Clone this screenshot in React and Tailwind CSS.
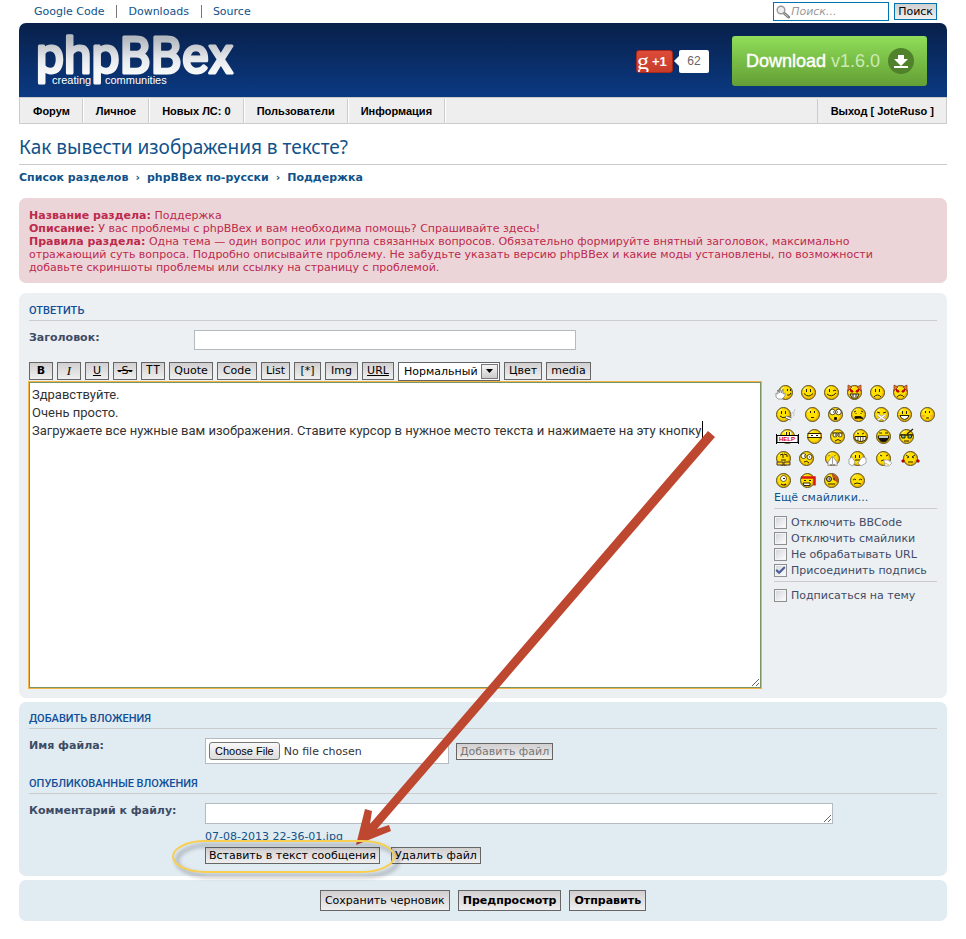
import React, { useState } from 'react';
import { Check } from 'lucide-react';
import { twMerge } from 'tailwind-merge';

const topLinks = ['Google Code', 'Downloads', 'Source'];
const navLinks = ['Форум', 'Личное', 'Новых ЛС: 0', 'Пользователи', 'Информация'];
const crumbs = ['Список разделов', 'phpBBex по-русски', 'Поддержка'];

const bbcodes = [
  { label: 'B', style: 'w-6 font-bold' },
  { label: 'I', style: "w-6 italic text-[13px] font-['Liberation_Serif',serif]" },
  { label: 'U', style: 'w-6 underline' },
  { label: '-S-', style: 'w-6 line-through' },
  { label: 'TT', style: "w-6 text-[12px] font-['Liberation_Mono',monospace]" },
  { label: 'Quote', style: 'w-11' },
  { label: 'Code', style: 'w-10' },
  { label: 'List', style: 'w-[29px]' },
  { label: '[*]', style: 'w-[27px]' },
  { label: 'Img', style: 'w-[33px]' },
  { label: 'URL', style: 'w-8 underline' },
];

// Each smiley: drawing width, offset of the face, and its features
const smileyRows = [
  [
    { name: 'hi', w: 17, x: 2 },
    { name: 'smile' },
    { name: 'wink' },
    { name: 'devil' },
    { name: 'sad' },
    { name: 'angrydevil' },
  ],
  [
    { name: 'smoke', w: 21 },
    { name: 'hmm' },
    { name: 'shock' },
    { name: 'scared' },
    { name: 'mute' },
    { name: 'grin' },
    { name: 'blush' },
  ],
  [
    { name: 'help', w: 23, x: 4 },
    { name: 'ninja' },
    { name: 'mad' },
    { name: 'teeth' },
    { name: 'laugh' },
    { name: 'pirate' },
  ],
  [
    { name: 'sorry' },
    { name: 'crazy' },
    { name: 'pray', w: 19, x: 3 },
    { name: 'clap', w: 18, x: 1 },
    { name: 'sick', w: 18, x: 1 },
    { name: 'boxer', w: 18, x: 2 },
  ],
  [
    { name: 'cyclop' },
    { name: 'rambo', w: 17, x: 1 },
    { name: 'terminator' },
    { name: 'sleepy', w: 18, x: 3 },
  ],
];

const dots = <path d="M5.500 4v3M9.500 4v3" />;

const horns = <path d="M1 6V0l4 2zM14 6V0l-4 2z" fill="#e8781c" stroke="#733" strokeWidth=".7" />;

const features = {
  hi: (
    <>
      <path d="M9.500 4v2M12.500 4v2M9 10q3 1 4-2" />
      <path d="M-2 8v4l2 2h4l3-3V8L5 9V4L3.500 8 2 3.500 1.500 8-.500 5 0 9z" fill="#fff" stroke="#777" strokeWidth=".7" />
    </>
  ),
  smile: <>{dots}<path d="M3 8.500q4.500 5 9 0" /></>,
  wink: <><path d="M5.500 4v3M9 6l2-1 1 1M3 9q4.500 4 9-1" /></>,
  devil: (
    <>
      <path d="M3 4l3 2v1H4zM12 4L9 6v1h2z" fill="#e00000" stroke="#b00" />
      <path d="M3 9h9l-2 4H5z" fill="#fff" />
      <path d="M6 9v3M9 9v3" />
    </>
  ),
  sad: <>{dots}<path d="M4 12q3.500-4 7 0" /></>,
  angrydevil: (
    <>
      <path d="M3 4l3 2v1H4zM12 4L9 6v1h2z" fill="#e00000" stroke="#b00" />
      <path d="M4 12q3.500-4 7 0" />
    </>
  ),
  smoke: (
    <>
      {dots}
      <path d="M4 9q3 3 6 1" />
      <path d="M10 10l5 2" stroke="#555" strokeWidth="3" />
      <path d="M10 10l5 2" stroke="#fff" strokeWidth="1.500" />
      <path d="M16 10q-2-3 1-5M18 9q-1-3 1-7" stroke="#bbb" strokeWidth=".8" />
    </>
  ),
  hmm: <><path d="M5.500 4v2M9.500 4v2M6 10.500h3" /></>,
  shock: (
    <>
      <circle cx="4.500" cy="5" r="2.800" fill="#fff" strokeWidth=".8" />
      <circle cx="10.500" cy="5" r="2.800" fill="#fff" strokeWidth=".8" />
      <path d="M5 5h1M9 5h1M6.500 10.500h2v2h-2z" fill="#000" />
    </>
  ),
  scared: <><path d="M3 5l2-1M5 6v1M10 4l2 1M10 6v1M4 9.500h6l2 2-4-.500-4 .500z" fill="#000" /></>,
  mute: (
    <>
      <path d="M3 5l3 1M12 5L9 6" />
      <path d="M4 8l7 5M11 8l-7 5" stroke="#999" strokeWidth="2.500" />
      <path d="M4 8l7 5M11 8l-7 5" stroke="#fff" strokeWidth="1.500" />
    </>
  ),
  grin: <>{dots}<path d="M3 8.500h9q-1 4-4.500 4T3 8.500z" fill="#fff" /></>,
  blush: (
    <>
      <path d="M5.500 4v2M9.500 4v2M6 11h3" />
      <path d="M2 9h3M10 9h3" stroke="#f5a32e" strokeWidth="1.500" />
    </>
  ),
  help: (
    <>
      <path d="M5 4h2M9 4h2" stroke="#fff" strokeWidth="3" />
      <path d="M6.500 3v3M9.500 3v3" />
    </>
  ),
  ninja: (
    <>
      <path d="M.500 4.500h14M.500 8.500h14" />
      <path d="M2 6.500h11" stroke="#fff" strokeWidth="3" />
      <path d="M4 6.500h2M9 6.500h2" />
    </>
  ),
  mad: (
    <>
      <path d="M2 4h11" />
      <circle cx="5" cy="6" r="2" fill="#fff" strokeWidth=".8" />
      <circle cx="10" cy="6" r="2" fill="#fff" strokeWidth=".8" />
      <path d="M5 6h1M9 6h1M5 12q3-3 6 0" />
    </>
  ),
  teeth: (
    <>
      <path d="M4 4l2 1M11 4L9 5" />
      <path d="M2 7.500h11v3q-5 4-11 0z" fill="#fff" />
      <path d="M5 7v5M7.500 7v5M10 7v5" strokeWidth=".7" />
    </>
  ),
  laugh: (
    <>
      <path d="M3 4h3M9 4h3" />
      <path d="M2 7h11q-1 6-5.500 6T2 7z" fill="#111" />
      <path d="M3 8h9" stroke="#fff" strokeWidth="1.500" />
    </>
  ),
  pirate: (
    <>
      <path d="M1 6h13M8 5l6-5" strokeWidth="1.300" />
      <path d="M2 6h4v3H3zM9 6h4l-1 3H9z" fill="#7db89a" />
      <path d="M5 12h5" />
    </>
  ),
  sorry: (
    <>
      <path d="M4 4l3-1v4M8 3l3 1v2M5 9h5" />
      <path d="M1 11h6v3H1zM8 11h6v3H8z" fill="#ffd800" stroke="#433" />
    </>
  ),
  crazy: (
    <>
      <circle cx="4.500" cy="5" r="2.500" fill="#fff" strokeWidth=".8" />
      <circle cx="10.500" cy="6" r="2.500" fill="#fff" strokeWidth=".8" />
      <path d="M5 5h1M10 6h1M5 11q3-2 5 1" />
    </>
  ),
  pray: (
    <>
      <path d="M3 5l2-1M9 5l2-1" stroke="#a80" />
      <path d="M7.500 5L3 11v4l3-2 1.500 2L9 13l3 2v-4z" fill="#fff" stroke="#888" strokeWidth=".8" />
      <path d="M7.500 6v8" stroke="#888" strokeWidth=".8" />
    </>
  ),
  clap: (
    <>
      {dots}
      <path d="M5 9h6" />
      <path d="M-1 8l3-2 3 5-2 4-4-2zM16 7l-4-1-4 6 3 3 5-3z" fill="#fff" stroke="#888" strokeWidth=".7" />
    </>
  ),
  sick: (
    <>
      <path d="M4 4l2 1M10 5l2-1M5 10q3-2 4 0" />
      <path d="M8 9h4l4 3-3 3H9z" fill="#fff" stroke="#999" strokeWidth=".7" />
      <path d="M9 12l4 2" stroke="#d8c030" />
    </>
  ),
  boxer: (
    <>
      <path d="M3 4l3 2-2 1M12 4L9 6l2 1M5 11h5" />
      <path d="M-1 9h2v2h-2zM14 9h2v2h-2z" fill="#d00" stroke="#a00" />
    </>
  ),
  cyclop: (
    <>
      <circle cx="7.500" cy="5.500" r="3" fill="#fff" strokeWidth=".7" />
      <path d="M7 5.500h2M5 11q3 2 5 0" strokeWidth="1.200" />
    </>
  ),
  rambo: (
    <>
      <path d="M1 4.500h13.500v8" stroke="#d81818" strokeWidth="2.500" />
      <path d="M4 7.500h2M9 7.500h2" />
      <path d="M3 10h7v2.500H4z" fill="#fff" />
    </>
  ),
  terminator: (
    <>
      <path d="M8 1l5 3 1 5-4-2z" fill="#c85a18" stroke="#a33" strokeWidth=".6" />
      <circle cx="5" cy="6" r="2.500" fill="#bbb" />
      <path d="M5 6h1" stroke="#d00" strokeWidth="1.500" />
      <path d="M9 6h2M4 11h7" />
    </>
  ),
  sleepy: <><path d="M3 7q2-2 3 0M9 7q2-2 3 0M4 11l3-1 4 1" /></>,
};

function Smiley({ name, w = 15, x = 0 }) {
  return (
    <svg width={w} height="16" viewBox={`0 0 ${w} 16`} role="img" aria-label={name} className="overflow-visible">
      <g transform={`translate(${x} 0)`} fill="none" stroke="#2a2000" strokeWidth="1">
        <circle cx="7.500" cy="7.500" r="7" fill="#f0b800" stroke="#57501f" />
        <circle cx="7" cy="7" r="5.500" fill="#ffe100" stroke="none" />
        <path d="M3 5q1-2 3-3" stroke="#fffbb0" />
        {(name === 'devil' || name === 'angrydevil') && horns}
        {features[name]}
      </g>
      {name === 'help' && (
        <g>
          <rect x="1" y="6.500" width="21" height="7" fill="#fff" stroke="#000" />
          <path d="M.5 5v10M22.500 5v10" stroke="#000" />
          <text x="3" y="12" fontSize="6" fontWeight="bold" fill="#e00000" fontFamily="Liberation Sans, sans-serif">
            HELP
          </text>
        </g>
      )}
    </svg>
  );
}

function PushButton({ className = '', children, ...props }) {
  return (
    <button
      type="button"
      className={twMerge(
        'border border-[#666] bg-linear-to-b from-[#d2cfd0] to-[#efefef] text-center text-black whitespace-nowrap',
        className
      )}
      {...props}
    >
      {children}
    </button>
  );
}

function Option({ label, checked = false }) {
  const [on, setOn] = useState(checked);
  return (
    <label className="flex h-4 items-center gap-1">
      <span className="relative flex">
        <input
          type="checkbox"
          checked={on}
          onChange={() => setOn(!on)}
          className="size-[13px] appearance-none border border-[#8e8f8f] bg-linear-to-br from-[#d0d3d8] to-white outline-1 -outline-offset-2 outline-[#f4f4f4]"
        />
        {on && <Check size={11} strokeWidth={5} className="pointer-events-none absolute top-px left-px text-[#4a5f97]" />}
      </span>
      {label}
    </label>
  );
}

function SectionTitle({ children }) {
  return (
    <h3 className="border-b border-[#ccc] pb-[2px] font-[Roboto,sans-serif] text-[11px] leading-[14px] font-medium text-[#115098] uppercase">
      {children}
    </h3>
  );
}

function Header() {
  return (
    <header>
      <div className="flex h-[23px] items-center justify-between pr-[10px] pl-[15px]">
        <ul className="flex text-[#105289]">
          {topLinks.map((link, i) => (
            <li key={link} className={i ? 'ml-3 border-l border-[#777] pl-[11px]' : ''}>
              <a href="#" className="hover:underline">{link}</a>
            </li>
          ))}
        </ul>
        <form className="flex items-center gap-[5px]" onSubmit={(e) => e.preventDefault()}>
          <label className="flex h-[19px] w-[116px] items-center border border-[#0075b0] bg-white pl-[2px]">
            <svg width="14" height="14" viewBox="0 0 14 14" className="shrink-0">
              <path d="M8 8l4.500 4" stroke="#777" strokeWidth="3" strokeLinecap="round" />
              <path d="M8.500 8.500l4 3.500" stroke="#ccc" strokeWidth="1" />
              <circle cx="5" cy="5" r="3.800" fill="#eee" stroke="#999" strokeWidth="1.400" />
            </svg>
            <input
              type="search"
              aria-label="Поиск"
              placeholder="Поиск..."
              className="w-full min-w-0 pl-px outline-none placeholder:text-[#999] placeholder:italic"
            />
          </label>
          <PushButton className="h-[17px] border-[#0075b0] px-[3px] leading-[14px]">Поиск</PushButton>
        </form>
      </div>

      <div className="flex h-[74px] items-center rounded-t-[7px] bg-linear-to-b from-[#08204a] to-[#0a3a83] pt-[2px] pr-5 pl-[18px]">
        <a href="#">
          <svg width="204" height="72" viewBox="0 0 204 72" role="img" aria-label="phpBBex creating communities">
            <defs>
              <linearGradient id="silver" x1="0" y1="0" x2="0" y2="1">
                <stop offset="0.200" stopColor="#b4b9c0" />
                <stop offset="0.550" stopColor="#e6e9ec" />
                <stop offset="0.800" stopColor="#f8f9fa" />
              </linearGradient>
            </defs>
            <text
              x="-1"
              y="48"
              fontSize="50"
              fontWeight="400"
              fontFamily="Roboto, sans-serif"
              fill="url(#silver)"
              stroke="url(#silver)"
              strokeWidth="3"
              strokeLinejoin="round"
            >
              phpBBex
            </text>
            <text x="15" y="59" fontSize="11" fontFamily="Liberation Sans, sans-serif" fill="#fff">creating</text>
            <text x="68" y="59" fontSize="11" fontFamily="Liberation Sans, sans-serif" fill="#fff">communities</text>
          </svg>
        </a>
        <div className="ml-auto flex items-center font-['Liberation_Sans',sans-serif]">
          <button
            type="button"
            className="flex h-[23px] w-[37px] items-center gap-[3px] overflow-hidden rounded-[3px] border border-[#a9281b] bg-linear-to-b from-[#dd4b39] to-[#c93c2a] font-bold text-white"
          >
            <span className="font-['Liberation_Serif',serif] text-[24px] leading-[14px] font-normal">g</span>
            <span className="text-[13px]">+1</span>
          </button>
          <svg width="5" height="10" viewBox="0 0 5 10" className="ml-px">
            <path d="M5 0v10L0 5z" fill="#fff" />
          </svg>
          <span className="flex h-[23px] w-[30px] items-center justify-center rounded-[2px] bg-white text-[12px] text-[#666]">62</span>
        </div>
        <a
          href="#"
          className="ml-[23px] flex h-[50px] w-[195px] items-center rounded-[3px] bg-linear-to-b from-[#90de5a] via-[#78bd45] to-[#649f36] pl-[14px] font-['Liberation_Sans',sans-serif] text-[18px] text-white"
        >
          <span className="[-webkit-text-stroke:0.4px_white]">Download</span>
          <span className="ml-[5px] text-[#cdeab5]">v1.6.0</span>
          <svg width="26" height="26" viewBox="0 0 26 26" className="ml-2">
            <circle cx="13" cy="13" r="13" fill="#4f822b" />
            <path d="M10 7h6v4h4l-7 7-7-7h4z" fill="#fff" />
            <path d="M6 19h14" stroke="#fff" strokeWidth="2" />
          </svg>
        </a>
      </div>

      <nav className="flex h-[27px] border border-[#ccc] bg-[#eee] pt-px font-['Liberation_Sans',sans-serif] font-bold text-black">
        {navLinks.map((link) => (
          <a key={link} href="#" className="flex items-center border-r border-[#ccc] pr-3 pl-[13px] shadow-[1px_0_0_#fff]">
            {link}
          </a>
        ))}
        <a href="#" className="ml-auto flex items-center border-l border-[#ccc] pr-3 pl-[13px]">Выход [ JoteRuso ]</a>
      </nav>
    </header>
  );
}

function Annotation() {
  return (
    <svg width="966" height="939" viewBox="0 0 966 939" className="pointer-events-none absolute top-0 left-0" aria-hidden="true">
      <defs>
        <filter id="soft" x="-10%" y="-30%" width="120%" height="180%">
          <feGaussianBlur stdDeviation="2" />
        </filter>
      </defs>
      <path d="M702.500 421v18" stroke="#000" />
      <path
        d="M708 431L715 437L377 829L389 825L391 831L356 845L365 809L372 811L370 824z"
        fill="#be4730"
      />
      <rect x="177" y="845" width="221" height="31" rx="32" ry="15.500" fill="none" stroke="#000" strokeOpacity=".3" strokeWidth="3" filter="url(#soft)" />
      <rect x="173" y="841" width="221" height="31" rx="32" ry="15.500" fill="none" stroke="#f8cf50" strokeWidth="2" />
    </svg>
  );
}

export default function App() {
  const [message, setMessage] = useState(
    'Здравствуйте.\nОчень просто.\nЗагружаете все нужные вам изображения. Ставите курсор в нужное место текста и нажимаете на эту кнопку'
  );

  return (
    <div className="relative min-h-screen bg-white px-[19px] pb-[18px] font-['DejaVu_Sans',sans-serif] text-[11px] leading-[13px] text-[#3e4b65]">
      <Header />

      <h1 className="mt-[9px] border-b border-[#ccc] pb-[3px] font-['Noto_Sans',sans-serif] text-[19px] leading-7 text-[#105289]">
        Как вывести изображения в тексте?
      </h1>
      <div className="mt-[6px] flex gap-[7px] font-bold text-[#105289]">
        {crumbs.map((crumb, i) => (
          <React.Fragment key={crumb}>
            {i > 0 && <span>›</span>}
            <a href="#" className="hover:underline">{crumb}</a>
          </React.Fragment>
        ))}
      </div>

      <div className="mt-[14px] rounded-[7px] bg-[#ecd5d8] pt-[11px] pr-[26px] pb-[9px] pl-[10px] text-[#bc2a4d]">
        <p><strong>Название раздела:</strong> Поддержка</p>
        <p><strong>Описание:</strong> У вас проблемы с phpBBex и вам необходима помощь? Спрашивайте здесь!</p>
        <p>
          <strong>Правила раздела:</strong> Одна тема — один вопрос или группа связанных вопросов. Обязательно
          формируйте внятный заголовок, максимально отражающий суть вопроса. Подробно описывайте проблему. Не
          забудьте указать версию phpBBex и какие моды установлены, по возможности добавьте скриншоты проблемы или
          ссылку на страницу с проблемой.
        </p>
      </div>

      <section className="mt-[10px] rounded-[7px] bg-[#ecf0f3] px-[10px] pt-[11px] pb-[10px]">
        <SectionTitle>Ответить</SectionTitle>
        <div className="mt-[9px] flex">
          <label htmlFor="subject" className="w-[165px] pt-px font-bold">Заголовок:</label>
          <input id="subject" type="text" className="h-5 w-[382px] border border-[#b4bac0] bg-white px-1" />
        </div>

        <div className="mt-[11px] flex h-5 items-center gap-1">
          {bbcodes.map(({ label, style }) => (
            <PushButton key={label} className={`h-[18px] ${style} leading-4`}>{label}</PushButton>
          ))}
          <div className="relative flex">
            <select
              aria-label="Размер"
              className="h-[19px] w-[102px] appearance-none border border-[#666] bg-white pl-[5px] text-black"
            >
              <option>Нормальный</option>
              <option>Маленький</option>
              <option>Большой</option>
            </select>
            <span className="pointer-events-none absolute top-[2px] right-[2px] flex h-[15px] w-[17px] items-center justify-center border border-[#777] bg-linear-to-b from-[#f5f5f5] to-[#ccc]">
              <svg width="7" height="4" viewBox="0 0 7 4"><path d="M0 0h7L3.500 4z" fill="#000" /></svg>
            </span>
          </div>
          <PushButton className="h-[18px] w-[38px] leading-4">Цвет</PushButton>
          <PushButton className="h-[18px] w-[45px] leading-4">media</PushButton>
        </div>

        <div className="mt-px flex gap-[13px]">
          <textarea
            aria-label="Сообщение"
            value={message}
            onChange={(e) => setMessage(e.target.value)}
            spellCheck={false}
            className="h-[306px] min-w-0 flex-1 border border-[#7a9464] bg-white px-[2px] py-[3px] font-[Roboto,sans-serif] text-[13px] leading-[18px] text-[#333] outline-1 outline-[#efb445]"
          />
          <div className="w-[163px]">
            <div className="flex flex-col gap-[6px] pt-[3px] pl-[2px]">
              {smileyRows.map((row, i) => (
                <div key={i} className="flex h-4 gap-2">
                  {row.map((s) => <Smiley key={s.name} {...s} />)}
                </div>
              ))}
            </div>
            <a href="#" className="mt-[2px] block text-[#105289]">Ещё смайлики...</a>
            <div className="mt-1 border-t border-[#ccc] pt-[5px]">
              <Option label="Отключить BBCode" />
              <Option label="Отключить смайлики" />
              <Option label="Не обрабатывать URL" />
              <Option label="Присоединить подпись" checked />
            </div>
            <div className="mt-[3px] border-t border-[#ccc] pt-[5px]">
              <Option label="Подписаться на тему" />
            </div>
          </div>
        </div>
      </section>

      <section className="mt-1 rounded-[7px] bg-[#e1ebf2] px-[10px] pt-[10px] pb-3">
        <SectionTitle>Добавить вложения</SectionTitle>
        <div className="mt-[9px] flex">
          <label htmlFor="file" className="w-44 pt-px font-bold">Имя файла:</label>
          <input
            id="file"
            type="file"
            className="h-[26px] w-[244px] border border-[#b4bac0] bg-white p-[3px] text-[#333] file:mr-1 file:h-[18px] file:rounded-[3px] file:border file:border-solid file:border-[#777] file:bg-linear-to-b file:from-[#f8f8f8] file:to-[#ddd] file:px-[5px] file:font-['Liberation_Sans',sans-serif] file:text-[11px] file:leading-[14px] file:text-black"
          />
          <PushButton className="mt-[5px] ml-[7px] h-[17px] px-[3px] text-[#777]" disabled>Добавить файл</PushButton>
        </div>

        <div className="mt-[13px]">
          <SectionTitle>Опубликованные вложения</SectionTitle>
        </div>
        <div className="mt-[9px] flex">
          <label htmlFor="comment" className="w-44 pt-px font-bold">Комментарий к файлу:</label>
          <div className="flex flex-1 flex-col items-start">
            <textarea id="comment" className="h-[21px] w-[628px] border border-[#b4bac0] bg-white px-1" />
            <a href="#" className="mt-[6px] text-[#105289]">07-08-2013 22-36-01.jpg</a>
            <div className="mt-1 flex gap-[11px]">
              <PushButton className="h-[17px] px-[3px]">Вставить в текст сообщения</PushButton>
              <PushButton className="h-[17px] px-[3px]">Удалить файл</PushButton>
            </div>
          </div>
        </div>
      </section>

      <div className="mt-1 flex justify-center gap-2 rounded-[7px] bg-[#e1ebf2] p-[10px]">
        <PushButton className="h-[21px] px-1">Сохранить черновик</PushButton>
        <PushButton className="h-[21px] px-1 font-bold">Предпросмотр</PushButton>
        <PushButton className="h-[21px] px-1 font-bold">Отправить</PushButton>
      </div>

      <Annotation />
    </div>
  );
}
